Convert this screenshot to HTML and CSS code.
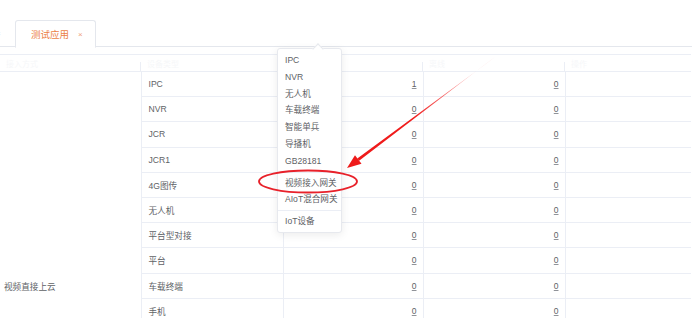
FILE: index.html
```html
<!DOCTYPE html>
<html lang="zh-CN">
<head>
<meta charset="utf-8">
<title>测试应用</title>
<link rel="stylesheet" href="styles.css">
</head>
<body>
<div class="page">
  <div class="crumb">应用管理</div>
  <div class="tabs">
    <div class="tab tab-prev"><span class="close">×</span></div>
    <div class="tab tab-active">测试应用<span class="close">×</span></div>
  </div>
  <table class="grid">
    <colgroup>
      <col class="c1"><col class="c2"><col class="c3"><col class="c4"><col class="c5">
    </colgroup>
    <thead>
      <tr><th>接入方式</th><th>设备类型</th><th>在线</th><th>离线</th><th>操作</th></tr>
    </thead>
    <tbody>
      <tr><td class="group" rowspan="17">视频直接上云</td><td class="label">IPC</td><td class="num"><u>1</u></td><td class="num"><u>0</u></td><td></td></tr>
      <tr><td class="label">NVR</td><td class="num"><u>0</u></td><td class="num"><u>0</u></td><td></td></tr>
      <tr><td class="label">JCR</td><td class="num"><u>0</u></td><td class="num"><u>0</u></td><td></td></tr>
      <tr><td class="label">JCR1</td><td class="num"><u>0</u></td><td class="num"><u>0</u></td><td></td></tr>
      <tr><td class="label">4G图传</td><td class="num"><u>0</u></td><td class="num"><u>0</u></td><td></td></tr>
      <tr><td class="label">无人机</td><td class="num"><u>0</u></td><td class="num"><u>0</u></td><td></td></tr>
      <tr><td class="label">平台型对接</td><td class="num"><u>0</u></td><td class="num"><u>0</u></td><td></td></tr>
      <tr><td class="label">平台</td><td class="num"><u>0</u></td><td class="num"><u>0</u></td><td></td></tr>
      <tr><td class="label">车载终端</td><td class="num"><u>0</u></td><td class="num"><u>0</u></td><td></td></tr>
      <tr><td class="label">手机</td><td class="num"><u>0</u></td><td class="num"><u>0</u></td><td></td></tr>
      <tr><td class="label">智能单兵</td><td class="num"><u>0</u></td><td class="num"><u>0</u></td><td></td></tr>
      <tr><td class="label">导播机</td><td class="num"><u>0</u></td><td class="num"><u>0</u></td><td></td></tr>
      <tr><td class="label">GB28181</td><td class="num"><u>0</u></td><td class="num"><u>0</u></td><td></td></tr>
      <tr><td class="label">视频接入网关</td><td class="num"><u>0</u></td><td class="num"><u>0</u></td><td></td></tr>
      <tr><td class="label">AIoT混合网关</td><td class="num"><u>0</u></td><td class="num"><u>0</u></td><td></td></tr>
      <tr><td class="label">IoT设备</td><td class="num"><u>0</u></td><td class="num"><u>0</u></td><td></td></tr>
      <tr><td class="label">其他</td><td class="num"><u>0</u></td><td class="num"><u>0</u></td><td></td></tr>
    </tbody>
  </table>

  <div class="menu">
    <ul class="menu-group">
      <li>IPC</li><li>NVR</li><li>无人机</li><li>车载终端</li><li>智能单兵</li><li>导播机</li><li>GB28181</li>
    </ul>
    <ul class="menu-group">
      <li>视频接入网关</li><li>AIoT混合网关</li>
    </ul>
    <ul class="menu-group">
      <li>IoT设备</li>
    </ul>
  </div>

  <svg class="annot" width="692" height="318" viewBox="0 0 692 318" xmlns="http://www.w3.org/2000/svg">
    <defs>
      <linearGradient id="fade" x1="495" y1="57" x2="358" y2="160" gradientUnits="userSpaceOnUse">
        <stop offset="0" stop-color="#f42a2a" stop-opacity="0"/>
        <stop offset="0.3" stop-color="#f42a2a" stop-opacity="0.6"/>
        <stop offset="0.6" stop-color="#f01c1c" stop-opacity="1"/>
        <stop offset="1" stop-color="#ee1a1a" stop-opacity="1"/>
      </linearGradient>
    </defs>
    <polygon points="495.3,56.6 494.7,57.4 357.3,158.4 359.1,160.8" fill="url(#fade)"/>
    <polygon points="347,168 361.5,163.8 355,155.2" fill="#ee1a1a"/>
    <ellipse cx="308" cy="181.5" rx="49" ry="11" fill="none" stroke="#e8212a" stroke-width="1.8"/>
  </svg>
</div>
</body>
</html>
```

FILE: styles.css
```css
* { box-sizing: border-box; }

html, body {
  margin: 0;
  padding: 0;
  background: #fff;
}

body {
  width: 692px;
  height: 318px;
  overflow: hidden;
  font-family: "Liberation Sans", "Noto Sans CJK SC", sans-serif;
  color: #606266;
}

.page {
  position: relative;
  width: 692px;
  height: 318px;
  overflow: hidden;
}

.crumb {
  height: 20px;
  margin-top: -11px;
  padding-left: 19px;
  font-size: 10px;
  line-height: 12px;
  color: #c8c8c8;
}

.tabs {
  display: flex;
  height: 27px;
  border-bottom: 1px solid #e4e7ed;
  margin-top: 11px;
}

.tab {
  height: 27px;
  display: flex;
  align-items: center;
  font-size: 9.5px;
}

.tab-prev {
  width: 15px;
  justify-content: flex-start;
  color: #c0c4cc;
  overflow: hidden;
}

.tab-prev .close {
  margin-left: -4px;
  font-size: 8px;
}

.tab-active {
  width: 81px;
  padding-left: 15px;
  border: 1px solid #e4e7ed;
  border-bottom-color: #fff;
  border-radius: 3px 3px 0 0;
  height: 28px;
  margin-bottom: -1px;
  color: #ec7f46;
  background: #fff;
}

.tab-active .close {
  margin-left: 9px;
  font-size: 8px;
  color: #f0a07a;
}

.grid {
  margin-top: 7px;
  width: 691px;
  border-collapse: collapse;
  table-layout: fixed;
  font-size: 8.6px;
  border-top: 1px solid #ebeef5;
}

.c1 { width: 141px; }
.c2 { width: 142px; }
.c3 { width: 140px; }
.c4 { width: 142px; }
.c5 { width: 126px; }

.grid th {
  height: 17px;
  padding: 0 6px;
  font-weight: normal;
  text-align: left;
  color: #f6f7f9;
  font-size: 8px;
  border-bottom: 1px solid #ebeef5;
  background: linear-gradient(#ebeef5, #ebeef5) right 7px / 1px 100% no-repeat;
}

.grid th:last-child { background: none; }

.grid td {
  height: 25.2px;
  padding: 0;
  border-bottom: 1px solid #ebeef5;
  border-right: 1px solid #ebeef5;
  vertical-align: middle;
  white-space: nowrap;
}

.grid td:last-child { border-right: none; }

.grid td.group {
  padding-left: 4px;
}

.grid td.label {
  padding-left: 7px;
}

.grid td.num {
  text-align: right;
  padding-right: 6px;
  font-size: 8.5px;
}

.grid td.num u {
  text-decoration-color: #909399;
}

.menu {
  position: absolute;
  left: 277px;
  top: 48px;
  width: 65px;
  padding: 3px 0 2px;
  background: #fff;
  border: 1px solid #e7e9ee;
  border-radius: 3px;
  box-shadow: 0 2px 8px rgba(0, 0, 0, 0.08);
}

.menu::before {
  content: "";
  position: absolute;
  left: 36px;
  top: -4px;
  width: 7px;
  height: 7px;
  background: #fff;
  border-left: 1px solid #e7e9ee;
  border-top: 1px solid #e7e9ee;
  transform: rotate(45deg);
}

.menu-group {
  list-style: none;
  margin: 0;
  padding: 0;
}

.menu-group + .menu-group {
  margin-top: 2px;
  padding-top: 2px;
  border-top: 1px solid #ebeef5;
}

.menu-group li {
  padding-left: 7px;
  height: 16.8px;
  line-height: 16.8px;
  font-size: 8.6px;
  white-space: nowrap;
  color: #606266;
}

.annot {
  position: absolute;
  left: 0;
  top: 0;
  pointer-events: none;
}
```
